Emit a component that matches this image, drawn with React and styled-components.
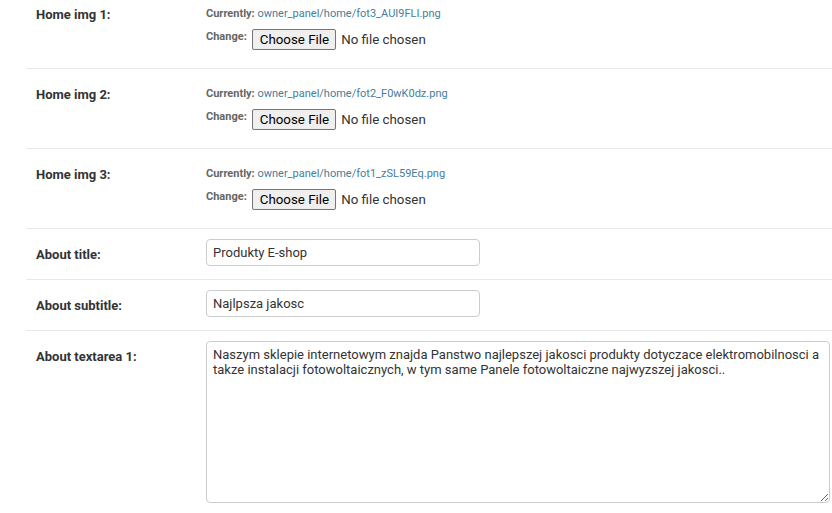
import styled, { createGlobalStyle } from 'styled-components'

const GlobalStyle = createGlobalStyle`
    html, body {
        margin: 0;
        padding: 0;
        background: #fff;
        overflow: hidden;
    }
    body {
        font-family: Roboto, "Liberation Sans", Arial, sans-serif;
        color: #333;
    }
`

const imageFields = [
    { label: 'Home img 1:', path: 'owner_panel/home/fot3_AUI9FLI.png' },
    { label: 'Home img 2:', path: 'owner_panel/home/fot2_F0wK0dz.png' },
    { label: 'Home img 3:', path: 'owner_panel/home/fot1_zSL59Eq.png' }
]

const textFields = [
    { label: 'About title:', value: 'Produkty E-shop' },
    { label: 'About subtitle:', value: 'Najlpsza jakosc' }
]

const aboutText =
    'Naszym sklepie internetowym znajda Panstwo najlepszej jakosci produkty dotyczace elektromobilnosci a takze instalacji fotowoltaicznych, w tym same Panele fotowoltaiczne najwyzszej jakosci..'

const App = () => {
    return (
        <>
            <GlobalStyle />
            <Form>
                {imageFields.map((f) => (
                    <Row key={f.label}>
                        <Label>{f.label}</Label>
                        <FileUpload>
                            <FileLine>
                                Currently: <FileLink href="#">{f.path}</FileLink>
                            </FileLine>
                            <ChangeLine>
                                <ChangeText>Change:</ChangeText>
                                <ChooseButton type="button">Choose File</ChooseButton>
                                <NoFile>No file chosen</NoFile>
                            </ChangeLine>
                        </FileUpload>
                    </Row>
                ))}
                {textFields.map((f) => (
                    <Row key={f.label}>
                        <Label>{f.label}</Label>
                        <TextInput type="text" defaultValue={f.value} />
                    </Row>
                ))}
                <Row>
                    <Label>About textarea 1:</Label>
                    <TextArea defaultValue={aboutText} />
                </Row>
            </Form>
        </>
    )
}

//스타일

const Form = styled.div`
    margin-top: -11px;
    padding-left: 26px;
`

const Row = styled.div`
    display: flex;
    align-items: flex-start;
    padding: 10px 0 10px 10px;
    border-bottom: 1px solid #e8e8e8;
    font-size: 13px;
`

const Label = styled.label`
    display: block;
    flex: 0 0 160px;
    padding: 9px 10px 0 0;
    font-size: 13px;
    font-weight: bold;
    line-height: 1;
    color: #333;
`

const FileUpload = styled.div`
    padding: 5px 0 8px;
    color: #666;
    font-size: 11px;
    font-weight: bold;
`

const FileLine = styled.div`
    line-height: 20px;
    height: 20px;
    white-space: nowrap;
`

const FileLink = styled.a`
    color: #447e9b;
    font-weight: normal;
    text-decoration: none;
`

const ChangeLine = styled.div`
    display: flex;
    align-items: flex-start;
    height: 26px;
`

const ChangeText = styled.span`
    margin-top: 3px;
    line-height: 20px;
`

const ChooseButton = styled.button`
    margin: 5px 0 0 5px;
    height: 21px;
    padding: 0 6px 0 7px;
    border: 1px solid #767676;
    border-radius: 2px;
    background: #efefef;
    color: #000;
    font-family: Roboto, "Liberation Sans", Arial, sans-serif;
    font-size: 13.33px;
    font-weight: normal;
    line-height: 19px;
`

const NoFile = styled.span`
    margin: 5px 0 0 5px;
    line-height: 21px;
    font-size: 13.33px;
    font-weight: normal;
    color: #333;
    white-space: nowrap;
`

const TextInput = styled.input`
    box-sizing: content-box;
    width: 20em;
    margin: 0 0 3px;
    padding: 5px 6px;
    border: 1px solid #ccc;
    border-radius: 4px;
    background: #fff;
    color: #333;
    font-family: Roboto, "Liberation Sans", Arial, sans-serif;
    font-size: 13px;
    line-height: 15px;
    outline: none;
`

const TextArea = styled.textarea`
    box-sizing: border-box;
    width: 624px;
    height: 162px;
    margin: 0 0 4px;
    padding: 5px 6px;
    border: 1px solid #ccc;
    border-radius: 4px;
    background: #fff;
    color: #333;
    font-family: Roboto, "Liberation Sans", Arial, sans-serif;
    font-size: 13px;
    line-height: normal;
    outline: none;
`

export default App
